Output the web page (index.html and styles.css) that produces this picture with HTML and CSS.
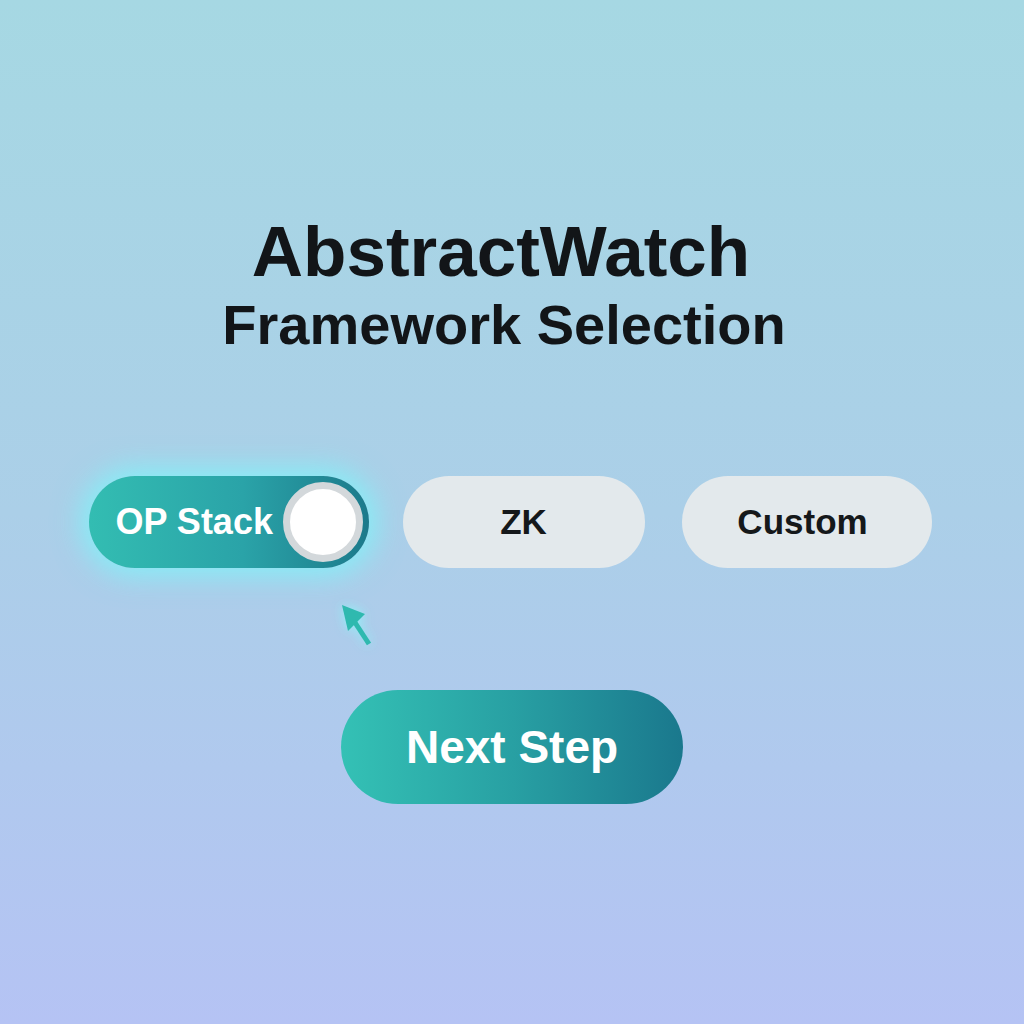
FILE: index.html
```html
<!DOCTYPE html>
<html lang="en">
<head>
  <meta charset="UTF-8">
  <title>AbstractWatch - Framework Selection</title>
  <link rel="stylesheet" href="styles.css">
</head>
<body>
  <main class="wizard">
    <header class="heading">
      <h1>AbstractWatch</h1>
      <h2>Framework Selection</h2>
    </header>

    <div class="choices">
      <div class="choice-wrap">
        <button class="choice toggle active">
          <span class="toggle-label">OP Stack</span>
          <span class="knob"></span>
        </button>
        <!-- pointer hovering under the active toggle -->
        <svg class="pointer" width="38" height="50" viewBox="0 0 38 50">
          <polygon points="5,5 28,14 11,31" fill="#2fb9af" />
          <line x1="17" y1="21" x2="32" y2="44" stroke="#2fb9af" stroke-width="5" />
        </svg>
      </div>
      <button class="choice pill zk">ZK</button>
      <button class="choice pill custom">Custom</button>
    </div>

    <button class="next">Next Step</button>
  </main>
</body>
</html>
```

FILE: styles.css
```css
html, body {
  height: 100%;
}

body {
  margin: 0;
  font-family: 'Liberation Sans', Arial, sans-serif;
  background: linear-gradient(180deg, #a6d8e3 0%, #abcfe8 50%, #b5c3f4 100%);
  color: #121518;
}

.wizard {
  display: flex;
  flex-direction: column;
  align-items: center;
  padding-top: 216px;
}

.heading {
  display: flex;
  flex-direction: column;
  align-items: center;
  margin-left: -16px;
}

h1, h2 {
  margin: 0;
  font-weight: 700;
  line-height: 1;
}

h1 {
  font-size: 71px;
  margin-left: -6px;
}

h2 {
  font-size: 56px;
  margin-top: 10px;
}

.choices {
  display: flex;
  gap: 34px;
  margin-top: 123px;
  margin-left: -4px;
}

button {
  font-family: inherit;
  font-weight: 700;
  border: none;
  cursor: pointer;
}

.choice {
  height: 92px;
  border-radius: 46px;
  font-size: 35px;
}

.choice-wrap {
  position: relative;
}

.toggle {
  width: 280px;
  display: flex;
  align-items: center;
  justify-content: space-between;
  padding: 0 6px 0 27px;
  color: #fff;
  background: linear-gradient(90deg, #33bdb2 0%, #2aa3a8 55%, #1c7a8b 100%);
  box-shadow: 0 0 28px 8px rgba(125, 245, 250, 0.8);
}

.toggle-label {
  font-size: 36px;
}

.knob {
  width: 80px;
  height: 80px;
  box-sizing: border-box;
  border-radius: 50%;
  background: #fff;
  border: 7px solid #d3d8db;
}

.pill {
  background: #e3e9ec;
  color: #15181a;
}

.zk {
  width: 242px;
}

.custom {
  width: 250px;
  margin-left: 3px;
  padding-right: 14px;
}

.pointer {
  position: absolute;
  left: 248px;
  top: 124px;
  filter: drop-shadow(0 0 6px rgba(140, 245, 250, 0.95));
}

.next {
  margin-top: 122px;
  width: 342px;
  height: 114px;
  border-radius: 57px;
  font-size: 46px;
  color: #fff;
  background: linear-gradient(90deg, #34c1b5 0%, #28a0a3 50%, #1a788d 100%);
}
```
